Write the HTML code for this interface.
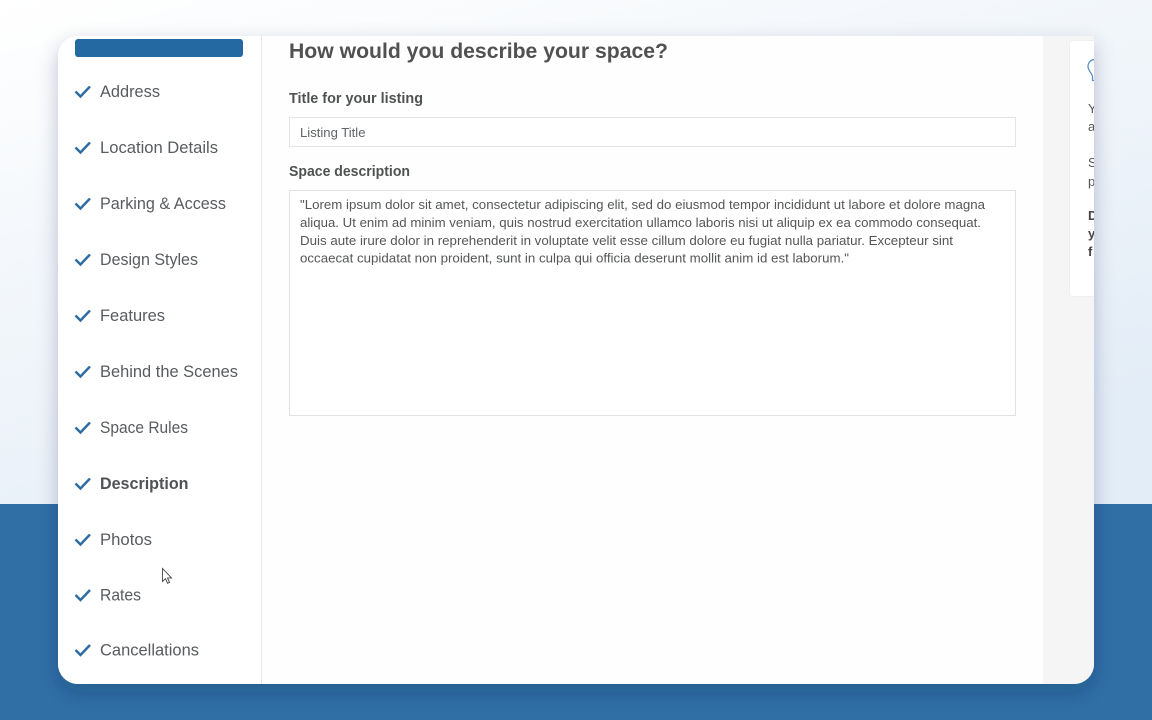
<!DOCTYPE html>
<html lang="en">
<head>
<meta charset="utf-8">
<title>Description</title>
<style>
html,body{margin:0;padding:0;width:1152px;height:720px;overflow:hidden;background:#fff}
svg{display:block;position:absolute;left:0;top:0}
text{font-family:"Liberation Sans",sans-serif}
.nav{font-size:16.5px;fill:#585c60}
.ta{font-size:12.8px;fill:#545755}
.lab{font-size:14.5px;font-weight:bold;fill:#505252}
.chk{fill:none;stroke:#2e6da4;stroke-width:2.5}
</style>
</head>
<body>
<svg width="1152" height="720" viewBox="0 0 1152 720" xmlns="http://www.w3.org/2000/svg">
<defs>
<linearGradient id="bg" x1="0" y1="0" x2="0.6" y2="1">
<stop offset="0" stop-color="#ffffff"/>
<stop offset="0.4" stop-color="#f3f7fb"/>
<stop offset="1" stop-color="#e3edf7"/>
</linearGradient>
<filter id="sh" x="-10%" y="-10%" width="120%" height="125%">
<feDropShadow dx="0" dy="8" stdDeviation="10" flood-color="#0a2a4a" flood-opacity="0.24"/>
</filter>
<clipPath id="card"><path d="M58 36H1094V664a20 20 0 0 1-20 20H78a20 20 0 0 1-20-20V56a20 20 0 0 1 20-20Z"/></clipPath>
</defs>
<rect width="1152" height="504" fill="url(#bg)"/>
<rect y="504" width="1152" height="216" fill="#2f6fa5"/>
<path d="M58 36H1094V664a20 20 0 0 1-20 20H78a20 20 0 0 1-20-20V56a20 20 0 0 1 20-20Z" fill="#fff" filter="url(#sh)"/>
<g clip-path="url(#card)">
<rect x="58" y="36" width="204" height="648" fill="#fff"/>
<rect x="261" y="36" width="1" height="648" fill="#e8e8e8"/>
<rect x="262" y="36" width="781" height="648" fill="#fefefe"/>
<rect x="1043" y="36" width="51" height="648" fill="#f5f5f5"/>
<rect x="1069.500" y="40.500" width="40" height="256" rx="3" fill="#fff" stroke="#efefef"/>
<path d="M1095 59.500c-4.500 0-7 3.500-7 7 0 4 3.500 6 4.500 10v4h2.500" fill="none" stroke="#5b93c4" stroke-width="1.300"/>
<text x="1088" y="113" font-size="13" fill="#555">Y</text>
<text x="1088" y="131" font-size="13" fill="#555">a</text>
<text x="1088" y="167" font-size="13" fill="#555">S</text>
<text x="1088" y="186" font-size="13" fill="#555">p</text>
<text x="1088" y="220" font-size="13" font-weight="bold" fill="#444">D</text>
<text x="1088" y="238" font-size="13" font-weight="bold" fill="#444">y</text>
<text x="1088" y="256" font-size="13" font-weight="bold" fill="#444">f</text>
</g>
<rect x="75" y="39" width="168" height="18" rx="3" fill="#2569a3"/>

<path class="chk" d="M75.500 91.500l5 5 9.500-10"/>
<text class="nav" x="100" y="96.800" textLength="60" lengthAdjust="spacingAndGlyphs">Address</text>
<path class="chk" d="M75.500 147.500l5 5 9.500-10"/>
<text class="nav" x="100" y="152.800" textLength="118" lengthAdjust="spacingAndGlyphs">Location Details</text>
<path class="chk" d="M75.500 203.500l5 5 9.500-10"/>
<text class="nav" x="100" y="208.800" textLength="126" lengthAdjust="spacingAndGlyphs">Parking &amp; Access</text>
<path class="chk" d="M75.500 259.500l5 5 9.500-10"/>
<text class="nav" x="100" y="264.800" textLength="98" lengthAdjust="spacingAndGlyphs">Design Styles</text>
<path class="chk" d="M75.500 315.500l5 5 9.500-10"/>
<text class="nav" x="100" y="320.800" textLength="65" lengthAdjust="spacingAndGlyphs">Features</text>
<path class="chk" d="M75.500 371.500l5 5 9.500-10"/>
<text class="nav" x="100" y="376.800" textLength="138" lengthAdjust="spacingAndGlyphs">Behind the Scenes</text>
<path class="chk" d="M75.500 427.500l5 5 9.500-10"/>
<text class="nav" x="100" y="432.800" textLength="88" lengthAdjust="spacingAndGlyphs">Space Rules</text>
<path class="chk" d="M75.500 483.500l5 5 9.500-10"/>
<text class="nav" x="100" y="488.800" textLength="88.500" lengthAdjust="spacingAndGlyphs" font-weight="bold" style="fill:#505356">Description</text>
<path class="chk" d="M75.500 539.500l5 5 9.500-10"/>
<text class="nav" x="100" y="544.800" textLength="52" lengthAdjust="spacingAndGlyphs">Photos</text>
<path class="chk" d="M75.500 595l5 5 9.500-10"/>
<text class="nav" x="100" y="600.300" textLength="41" lengthAdjust="spacingAndGlyphs">Rates</text>
<path class="chk" d="M75.500 650l5 5 9.500-10"/>
<text class="nav" x="100" y="655.300" textLength="99" lengthAdjust="spacingAndGlyphs">Cancellations</text>

<text x="289" y="58" font-size="21" font-weight="bold" fill="#505150" textLength="379" lengthAdjust="spacingAndGlyphs">How would you describe your space?</text>
<text class="lab" x="289" y="103" textLength="134" lengthAdjust="spacingAndGlyphs">Title for your listing</text>
<rect x="289.500" y="117.500" width="726" height="29" fill="#fff" stroke="#e4e4e4"/>
<text x="300" y="136.800" font-size="12.800" fill="#606466" textLength="65.500" lengthAdjust="spacingAndGlyphs">Listing Title</text>
<text class="lab" x="289" y="176" textLength="121" lengthAdjust="spacingAndGlyphs">Space description</text>
<rect x="289.500" y="190.500" width="726" height="225" fill="#fff" stroke="#e2e2e2"/>
<text class="ta" x="300" y="209" textLength="685" lengthAdjust="spacingAndGlyphs">"Lorem ipsum dolor sit amet, consectetur adipiscing elit, sed do eiusmod tempor incididunt ut labore et dolore magna</text>
<text class="ta" x="300" y="226.800" textLength="681" lengthAdjust="spacingAndGlyphs">aliqua. Ut enim ad minim veniam, quis nostrud exercitation ullamco laboris nisi ut aliquip ex ea commodo consequat.</text>
<text class="ta" x="300" y="244.800" textLength="653" lengthAdjust="spacingAndGlyphs">Duis aute irure dolor in reprehenderit in voluptate velit esse cillum dolore eu fugiat nulla pariatur. Excepteur sint</text>
<text class="ta" x="300" y="262.400" textLength="549" lengthAdjust="spacingAndGlyphs">occaecat cupidatat non proident, sunt in culpa qui officia deserunt mollit anim id est laborum."</text>

<path d="M162.500 568.500v13l3-2.800 2 4.600 2-.9-2-4.500h4Z" fill="#fff" stroke="#444" stroke-width="0.900"/>
</svg>
</body>
</html>
